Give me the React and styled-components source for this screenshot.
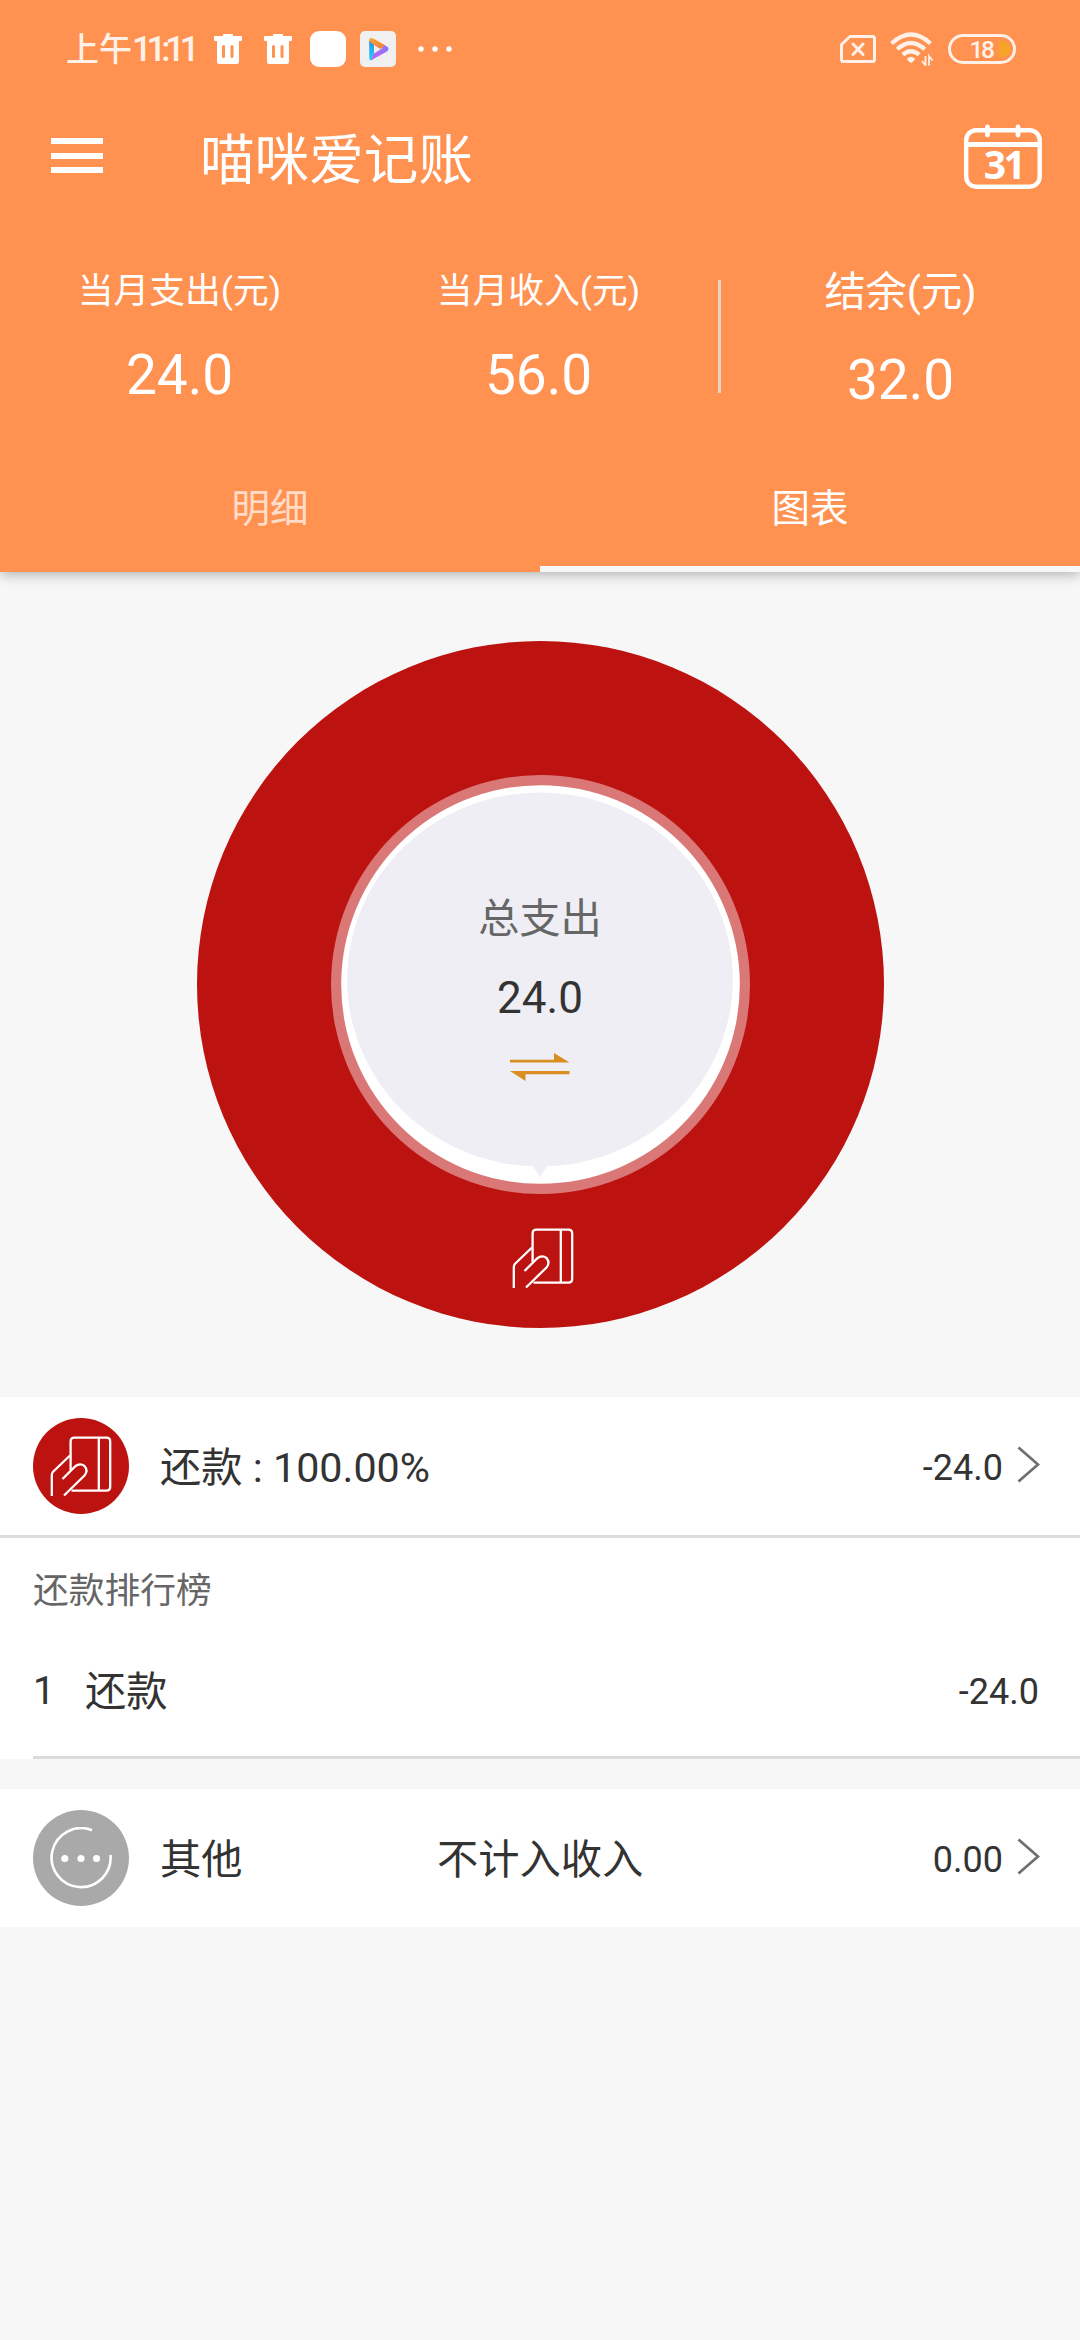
import React from "react";
import styled, { createGlobalStyle } from "styled-components";

const GlobalStyle = createGlobalStyle`
  * {
    box-sizing: border-box;
  }
  body {
    margin: 0;
    background-color: #f7f7f7;
    font-family: Roboto, "Noto Sans CJK SC", sans-serif;
    color: #333333;
  }
`;

const Page = styled.div`
  width: 1080px;
  min-height: 2340px;
  background-color: #f7f7f7;
`;

const Header = styled.header`
  position: relative;
  background-color: #ff9151;
  color: white;
  box-shadow: 0 3px 12px rgba(0, 0, 0, 0.28);
`;

const StatusBar = styled.div`
  display: flex;
  align-items: center;
  justify-content: space-between;
  height: 98px;
  padding: 0 64px 0 66px;
`;

const StatusGroup = styled.div`
  display: flex;
  align-items: center;
  gap: ${props => props.$gap}px;
`;

const AppIcons = styled.div`
  display: flex;
  gap: 14px;
  margin-left: -4px;
`;

const Clock = styled.div`
  display: flex;
  width: 126px;
  padding-top: 2px;
  font-size: 33px;
  line-height: 40px;
  font-weight: 500;
  color: #fff1e8;
  white-space: nowrap;
`;

const ClockDigits = styled.span`
  font-size: 35px;
  letter-spacing: -5.3px;
`;

const BlankApp = styled.div`
  width: 36px;
  height: 36px;
  border-radius: 9px;
  background-color: white;
`;

const AppBar = styled.div`
  display: flex;
  align-items: center;
  height: 122px;
  padding: 0 38px 0 51px;
`;

const MenuButton = styled.button`
  display: flex;
  flex-direction: column;
  justify-content: space-between;
  width: 52px;
  height: 35px;
  margin: 0 97px 7px 0;
  padding: 0;
  border: none;
  background: none;
`;

const MenuLine = styled.span`
  height: 6px;
  background-color: white;
`;

const AppTitle = styled.h1`
  flex: 1;
  margin: 1px 0 0;
  font-size: 54.6px;
  font-weight: 400;
  line-height: 70px;
`;

const Stats = styled.div`
  display: flex;
  height: 231px;
  padding-top: 47px;
`;

const Stat = styled.div`
  display: flex;
  flex: 1;
  flex-direction: column;
  align-items: center;
  gap: ${props => (props.$large ? 31 : 28)}px;
`;

const StatLabel = styled.div`
  font-size: ${props => (props.$large ? 41.25 : 35.75)}px;
  line-height: ${props => (props.$large ? 50 : 48)}px;
`;

const StatValue = styled.div`
  font-size: 55px;
  line-height: 64px;
`;

const Divider = styled.div`
  width: 3px;
  height: 113px;
  margin-top: 13px;
  background-color: #e9d2c5;
`;

const Tabs = styled.div`
  display: flex;
`;

const Tab = styled.button`
  flex: 1;
  height: 121px;
  padding: 0 0 8px;
  border: none;
  border-bottom: 6px solid ${props => (props.$active ? "#f7f7f7" : "transparent")};
  background: none;
  font-family: inherit;
  font-size: 38.5px;
  color: ${props => (props.$active ? "white" : "rgba(255, 255, 255, 0.7)")};
`;

const ChartArea = styled.section`
  display: flex;
  justify-content: center;
  height: 825px;
  padding-top: 68.5px;
`;

const Donut = styled.div`
  display: grid;
  width: 687px;
  height: 687px;
  > * {
    grid-area: 1 / 1;
  }
`;

const DonutCenter = styled.div`
  z-index: 1;
  display: flex;
  flex-direction: column;
  align-items: center;
  padding-top: 250px;
`;

const TotalLabel = styled.div`
  font-size: 41.25px;
  line-height: 56px;
  color: #666666;
`;

const TotalValue = styled.div`
  margin: 23px 0 27px;
  font-size: 44px;
  line-height: 56px;
`;

const Row = styled.div`
  display: flex;
  align-items: center;
  height: 138px;
  padding: 0 40px 0 33px;
  background-color: white;
`;

const RowIcon = styled.div`
  display: flex;
  align-items: center;
  justify-content: center;
  width: 96px;
  height: 96px;
  margin-right: 31px;
  border-radius: 50%;
  background-color: ${props => props.$color};
`;

const RowName = styled.div`
  width: ${props => props.$width || "auto"};
  padding-top: 4px;
  font-size: 41.25px;
  line-height: 56px;
  white-space: pre;
`;

const Amount = styled.div`
  margin-left: auto;
  padding-top: 3px;
  font-size: 36px;
  line-height: 56px;
`;

const Chevron = styled.svg`
  margin: 0 0 3px 14px;
`;

const Ranking = styled.section`
  border-top: 3px solid #dbdcdc;
  background-color: white;
`;

const RankingTitle = styled.div`
  padding: 29px 0 0 33px;
  font-size: 35.75px;
  line-height: 49px;
  color: #666666;
`;

const RankingRow = styled.div`
  display: flex;
  align-items: center;
  height: 143px;
  margin-left: 33px;
  padding: 8px 41px 0 0;
  border-bottom: 3px solid #dbdbdb;
`;

const RankNo = styled.div`
  width: 52px;
  padding-top: 2px;
  font-size: 39px;
`;

const Gap = styled.div`
  height: 30px;
`;

const TrashIcon = () => (
  <svg width="28" height="32" viewBox="0 0 28 32">
    <path
      fill="#fff"
      fillRule="evenodd"
      d="M9 3V2q0-1 1-1h8q1 0 1 1v1h8q1 0 1 1v3q0 1-1 1h-2v21q0 2-2 2H5q-2 0-2-2V8H1Q0 8 0 7V4q0-1 1-1zM9.500 12q-1.500 0-1.500 1.500v10q0 1.500 1.500 1.500t1.500-1.500v-10q0-1.500-1.500-1.500zM18 12q-1.500 0-1.500 1.500v10q0 1.500 1.500 1.500t1.500-1.500v-10q0-1.500-1.500-1.500z"
    />
  </svg>
);

const PlayerIcon = () => (
  <svg width="36" height="36" viewBox="0 0 36 36">
    <defs>
      <linearGradient id="orange" x1="0" y1="0" x2="1" y2="1">
        <stop offset="0" stopColor="#fba82c" />
        <stop offset="1" stopColor="#f07a4a" />
      </linearGradient>
      <linearGradient id="blue" x1="0" y1="0" x2="0" y2="1">
        <stop offset="0" stopColor="#2f8fea" />
        <stop offset="1" stopColor="#22d3f5" />
      </linearGradient>
      <linearGradient id="purple" x1="0" y1="1" x2="1" y2="0">
        <stop offset="0" stopColor="#cf5cf5" />
        <stop offset="1" stopColor="#7d7bf8" />
      </linearGradient>
    </defs>
    <rect width="36" height="36" rx="5" fill="#f0f0f1" />
    <path d="M9.200 9.500v17.500q0 3 2.500 2l2.300-1.500V13z" fill="url(#blue)" />
    <path d="M11 29.200l16-8.600q3-2.400 0-5l-4-2-1 4-8 5z" fill="url(#purple)" />
    <path d="M9.200 10q0-4.500 4-2.500l12 6.800-5 3.700L14 14z" fill="url(#orange)" />
  </svg>
);

const MoreIcon = () => (
  <svg width="34" height="6" viewBox="0 0 34 6" fill="#fff">
    <circle cx="3" cy="3" r="2.700" />
    <circle cx="17" cy="3" r="2.700" />
    <circle cx="31" cy="3" r="2.700" />
  </svg>
);

const NoSimIcon = () => (
  <svg width="36" height="28" viewBox="0 0 36 28" fill="none" stroke="#fff1e8">
    <path d="M10 1.500h22.500q2 0 2 2v21q0 2-2 2h-29q-2 0-2-2V9.500z" strokeWidth="3" strokeLinejoin="round" />
    <path d="M13 9l10 10.500M23 9L13 19.500" strokeWidth="3" strokeLinecap="round" />
  </svg>
);

const WifiIcon = () => (
  <svg width="44" height="34" viewBox="0 0 44 34" fill="none" stroke="#fff1e8">
    <path d="M1.500 11.500q19.500-18 39 0" strokeWidth="4.200" />
    <path d="M7.200 17.200q13.800-12.500 27.600 0" strokeWidth="4.200" />
    <path d="M12.800 22.700q8.200-7 16.400 0" strokeWidth="4.200" />
    <path d="M17 26.500q4-3.500 8 0q0 2-4 4.500q-4-2.500-4-4.500z" fill="#fff1e8" stroke="none" />
    <path d="M35.500 24v9.500l-3.500-4.500M39 33.500V24l3.500 4.500" strokeWidth="1.800" />
  </svg>
);

const BatteryIcon = () => (
  <svg width="68" height="30" viewBox="0 0 68 30">
    <path d="M51 6q10 1 12 9q-2 8-12 9z" fill="#f5a426" />
    <rect x="1.500" y="1.500" width="65" height="27" rx="13.500" fill="none" stroke="#fff1e8" strokeWidth="3" />
    <text x="21.500" y="24" fontSize="24.500" fontWeight="500" letterSpacing="-2.500" fill="#fff1e8">
      18
    </text>
  </svg>
);

const CalendarSvg = styled.svg`
  margin-bottom: 5px;
`;

const CalendarIcon = () => (
  <CalendarSvg width="78" height="66" viewBox="0 0 78 66" fill="none" stroke="#fff">
    <rect x="2.200" y="6.200" width="73.500" height="56.500" rx="10" strokeWidth="4.400" />
    <path d="M2 20.500h74" strokeWidth="5" />
    <path d="M23.500 3v8M54 3v8" strokeWidth="4.800" strokeLinecap="round" />
    <text
      x="39.500"
      y="55"
      textAnchor="middle"
      fontSize="39"
      fontWeight="700"
      letterSpacing="-2.500"
      fontFamily="Noto Sans"
      fill="#fff"
      stroke="none"
    >
      31
    </text>
  </CalendarSvg>
);

// hand holding a bank card
const CardPath = () => (
  <g fill="none" stroke="#fff" strokeWidth="2.300" strokeLinejoin="round">
    <path d="M20.600 33V4.500q0-3.800 3.800-3.800h32q3.800 0 3.800 3.800v45.300q0 3.800-3.800 3.800H21.500" />
    <path d="M48.800 1v52.500" />
    <path d="M1.800 59V38q0-2 1.500-3.500L20 18.500" />
    <path d="M12.500 42L25 29.500q5-4 9.500-.5q4 4.500 0 9.500L14 58.500" />
  </g>
);

const CardIcon = () => (
  <svg width="62" height="61" viewBox="0 -1 62 61">
    <CardPath />
  </svg>
);

const OtherIcon = () => (
  <svg width="62" height="62" viewBox="0 0 62 62">
    <path d="M42 3.200A29.500 29.500 0 1 0 60.500 28" fill="none" stroke="#fff" strokeWidth="2.600" />
    <g fill="#fff">
      <circle cx="14.800" cy="31.500" r="3.600" />
      <circle cx="31" cy="31.500" r="3.600" />
      <circle cx="46.500" cy="31.500" r="3.600" />
    </g>
  </svg>
);

const SwapIcon = () => (
  <svg width="60" height="28" viewBox="0 0 60 28" fill="#d88f1f">
    <path d="M0 6.700h44V0l15.500 9.500H0z" />
    <path d="M59.500 21.300h-44V28L0 18h59.500z" />
  </svg>
);

const Arrow = () => (
  <Chevron width="23" height="37" viewBox="0 0 23 37">
    <path d="M1.500 1.500L21 18.500L1.500 35.500" fill="none" stroke="#6e6e6e" strokeWidth="2.800" />
  </Chevron>
);

const stats = [
  { label: "当月支出(元)", value: "24.0" },
  { label: "当月收入(元)", value: "56.0" }
];

export default () => {
  return (
    <Page>
      <GlobalStyle />
      <Header>
        <StatusBar>
          <StatusGroup $gap={22}>
            <Clock>
              上午<ClockDigits>11:11</ClockDigits>
            </Clock>
            <TrashIcon />
            <TrashIcon />
            <AppIcons>
              <BlankApp />
              <PlayerIcon />
            </AppIcons>
            <MoreIcon />
          </StatusGroup>
          <StatusGroup $gap={14}>
            <NoSimIcon />
            <WifiIcon />
            <BatteryIcon />
          </StatusGroup>
        </StatusBar>

        <AppBar>
          <MenuButton>
            <MenuLine />
            <MenuLine />
            <MenuLine />
          </MenuButton>
          <AppTitle>喵咪爱记账</AppTitle>
          <CalendarIcon />
        </AppBar>

        <Stats>
          {stats.map(stat => (
            <Stat key={stat.label}>
              <StatLabel>{stat.label}</StatLabel>
              <StatValue>{stat.value}</StatValue>
            </Stat>
          ))}
          <Divider />
          <Stat $large>
            <StatLabel $large>结余(元)</StatLabel>
            <StatValue>32.0</StatValue>
          </Stat>
        </Stats>

        <Tabs>
          <Tab>明细</Tab>
          <Tab $active>图表</Tab>
        </Tabs>
      </Header>

      <ChartArea>
        <Donut>
          <svg width="687" height="687" viewBox="0 0 687 687">
            <circle cx="343.500" cy="343.500" r="343.500" fill="#bc1210" />
            <circle cx="343.500" cy="343.500" r="209.500" fill="#d97876" />
            <circle cx="343.500" cy="343.500" r="199.300" fill="#fff" />
            <ellipse cx="343" cy="338.500" rx="192.800" ry="187" fill="#efeef4" />
            <path d="M335 524h16l-8 12z" fill="#efeef4" />
            <g transform="translate(315 588)">
              <CardPath />
            </g>
          </svg>
          <DonutCenter>
            <TotalLabel>总支出</TotalLabel>
            <TotalValue>24.0</TotalValue>
            <SwapIcon />
          </DonutCenter>
        </Donut>
      </ChartArea>

      <Row>
        <RowIcon $color="#bc1210">
          <CardIcon />
        </RowIcon>
        <RowName>还款 : 100.00%</RowName>
        <Amount>-24.0</Amount>
        <Arrow />
      </Row>
      <Ranking>
        <RankingTitle>还款排行榜</RankingTitle>
        <RankingRow>
          <RankNo>1</RankNo>
          <RowName>还款</RowName>
          <Amount>-24.0</Amount>
        </RankingRow>
      </Ranking>
      <Gap />
      <Row>
        <RowIcon $color="#a9a9a9">
          <OtherIcon />
        </RowIcon>
        <RowName $width="277px">其他</RowName>
        <RowName>不计入收入</RowName>
        <Amount>0.00</Amount>
        <Arrow />
      </Row>
    </Page>
  );
};
